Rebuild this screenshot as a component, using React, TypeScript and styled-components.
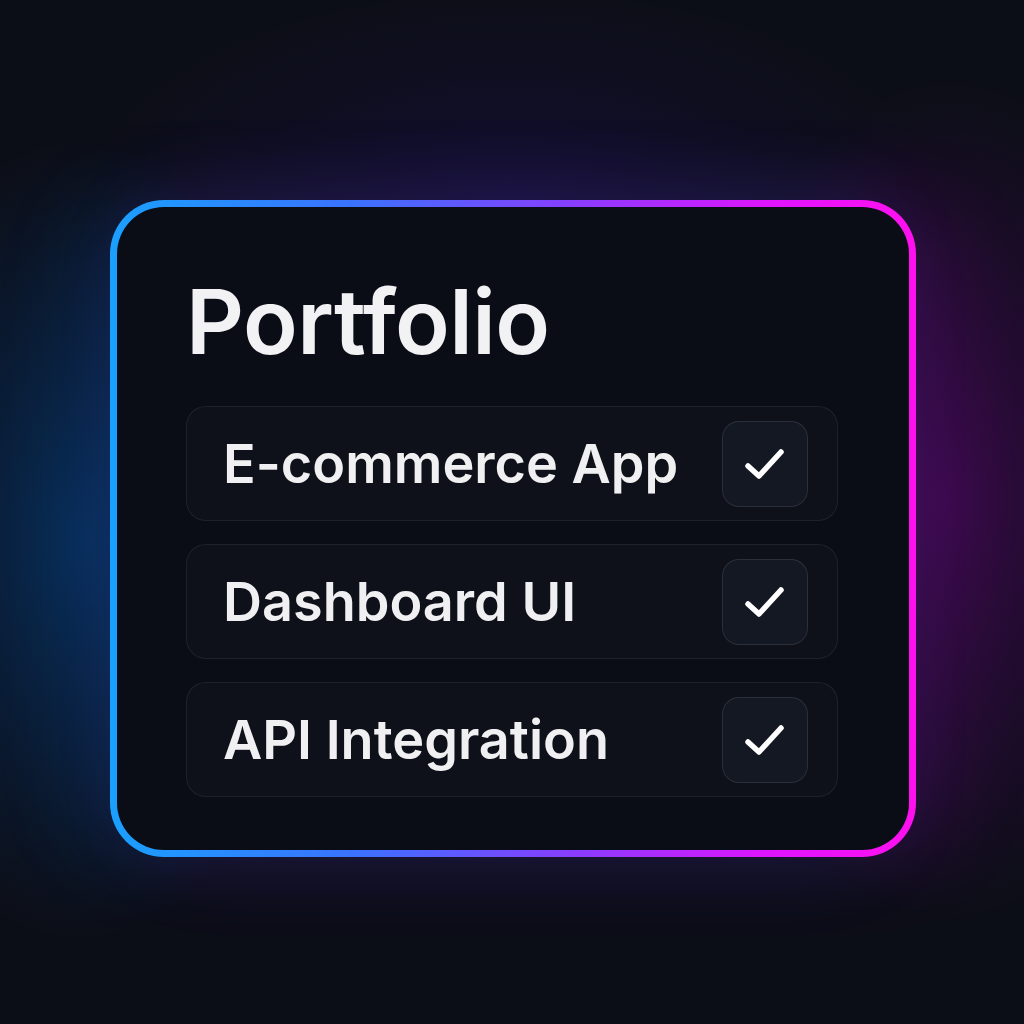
import React from "react";
import styled, { createGlobalStyle } from "styled-components";

const Global = createGlobalStyle`
  html, body { margin: 0; padding: 0; background: #0c0e17; }
  body { font-family: "Inter", "Noto Sans", sans-serif; }
`;

const Page = styled.div`
  width: 1024px;
  height: 1024px;
  box-sizing: border-box;
  padding: 200px 0 0 110px;
  background:
    radial-gradient(ellipse 240px 400px at 80px 540px, rgba(0, 110, 220, 0.3), rgba(0, 110, 220, 0) 100%),
    radial-gradient(ellipse 240px 420px at 950px 500px, rgba(170, 0, 200, 0.25), rgba(170, 0, 200, 0) 100%),
    radial-gradient(ellipse 420px 200px at 512px 190px, rgba(40, 20, 120, 0.25), rgba(40, 20, 120, 0) 100%),
    #0c0e17;
  overflow: hidden;
`;

const Card = styled.div`
  width: 806px;
  height: 657px;
  box-sizing: border-box;
  border: 7px solid transparent;
  border-radius: 54px;
  background:
    linear-gradient(#0b0d16, #0b0d16) padding-box,
    linear-gradient(90deg, #1aa0ff 0%, #3a72ff 30%, #8a3cff 58%, #e014ff 82%, #ff10ee 100%) border-box;
  box-shadow: -30px 0 90px rgba(0, 120, 255, 0.12), 30px 0 90px rgba(220, 0, 255, 0.12);
  padding: 55px 71px 0 69px;
  display: flex;
  flex-direction: column;
`;

const Title = styled.h1`
  margin: 0 0 24px 0;
  font-size: 90px;
  line-height: 120px;
  font-weight: 600;
  color: #f2f2f4;
  letter-spacing: -0.5px;
`;

const List = styled.div`
  display: flex;
  flex-direction: column;
  gap: 23px;
`;

const Row = styled.div`
  height: 115px;
  box-sizing: border-box;
  border: 1.5px solid rgba(255, 255, 255, 0.07);
  border-radius: 20px;
  background: #0e111a;
  display: flex;
  align-items: center;
  justify-content: space-between;
  padding: 0 29px 0 36px;
`;

const Label = styled.span`
  font-size: 54px;
  font-weight: 600;
  color: #f0f0f2;
  letter-spacing: 0;
`;

const Check = styled.div`
  width: 86px;
  height: 86px;
  box-sizing: border-box;
  border-radius: 17px;
  border: 1.5px solid rgba(255, 255, 255, 0.1);
  background: #141823;
  display: flex;
  align-items: center;
  justify-content: center;
`;

const CheckIcon = () => (
  <svg width="44" height="44" viewBox="0 0 44 44" fill="none">
    <path d="M5 24 L16 34 L38 10" stroke="#ffffff" strokeWidth="5.5" strokeLinecap="round" strokeLinejoin="round" />
  </svg>
);

const items = ["E-commerce App", "Dashboard UI", "API Integration"];

export default function App() {
  return (
    <Page>
      <Global />
      <Card>
        <Title>Portfolio</Title>
        <List>
          {items.map((t) => (
            <Row key={t}>
              <Label>{t}</Label>
              <Check>
                <CheckIcon />
              </Check>
            </Row>
          ))}
        </List>
      </Card>
    </Page>
  );
}
